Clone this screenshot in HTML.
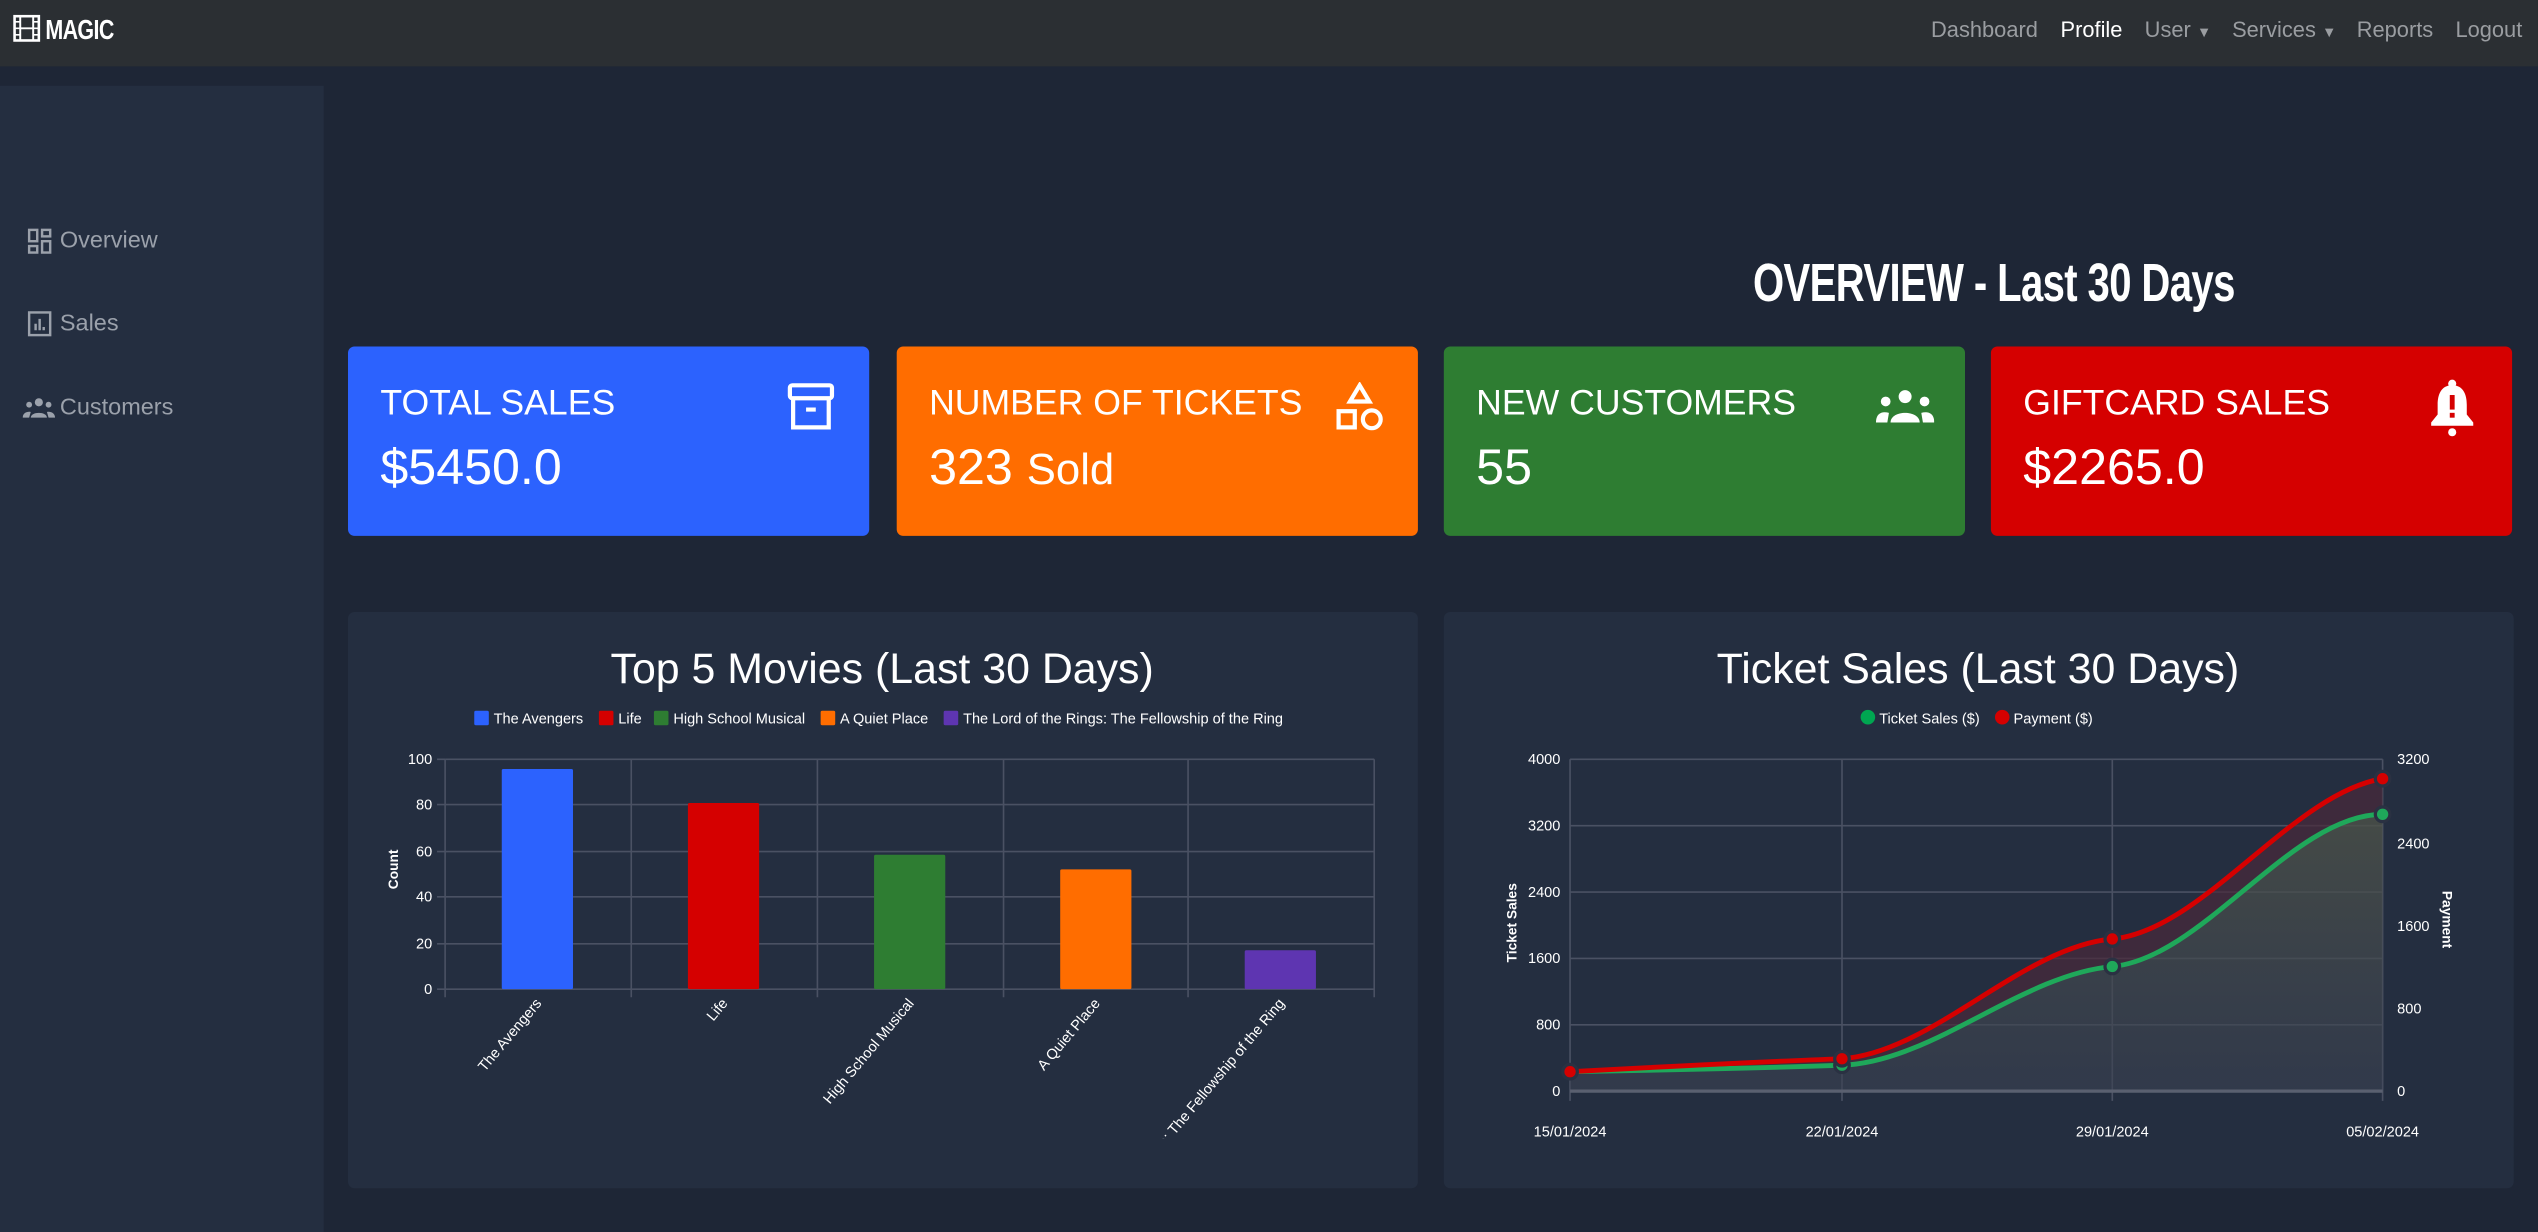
<!DOCTYPE html>
<html><head><meta charset="utf-8"><style>
html,body{margin:0;padding:0;background:#1e2636;overflow:hidden;width:2538px;height:1232px}
#w{position:absolute;left:0;top:0;width:1568px;height:761px;transform:scale(1.61862,1.6189);transform-origin:0 0;font-family:"Liberation Sans",sans-serif;color:#fff}
.a{position:absolute}
.nav{left:0;top:0;width:1568px;height:41px;background:#2b2f33}
.nl{top:11px;font-size:13.5px;color:#9a9da1;white-space:nowrap}
.side{left:0;top:53px;width:200px;height:708px;background:#242e40}
.si{left:37px;font-size:14.5px;color:#9ba1ab}
.card{top:214px;width:322px;height:117px;border-radius:4px}
.ct{left:20px;top:22px;font-size:22px;white-space:nowrap}
.cv{left:20px;top:56px;font-size:31px;white-space:nowrap}
.panel{top:378px;width:661px;height:356px;background:#242e40;border-radius:4px}
</style></head><body><div id="w">
<div class="a nav"></div>
<svg class="a" style="left:8px;top:9px" width="17" height="17" viewBox="0 0 17 17"><rect x="1" y="1" width="15" height="15" fill="none" stroke="#fff" stroke-width="1.6"/><line x1="4.5" y1="1" x2="4.5" y2="16" stroke="#fff" stroke-width="1.2"/><line x1="12.5" y1="1" x2="12.5" y2="16" stroke="#fff" stroke-width="1.2"/><line x1="4.5" y1="8.5" x2="12.5" y2="8.5" stroke="#fff" stroke-width="1.2"/><path d="M1 4.5h3.5M1 8.5h3.5M1 12.5h3.5M12.5 4.5H16M12.5 8.5H16M12.5 12.5H16" stroke="#fff" stroke-width="1"/></svg>
<div class="a" style="left:28px;top:9px;font-size:17px;font-weight:bold;transform:scaleX(0.78);transform-origin:0 0;letter-spacing:-0.5px">MAGIC</div>
<div class="a nl" style="left:1193px">Dashboard</div>
<div class="a nl" style="left:1273px;color:#fff">Profile</div>
<div class="a nl" style="left:1325px">User <span style="font-size:9px">▼</span></div>
<div class="a nl" style="left:1379px">Services <span style="font-size:9px">▼</span></div>
<div class="a nl" style="left:1456px">Reports</div>
<div class="a nl" style="left:1517px">Logout</div>

<div class="a side"></div>
<svg class="a" style="left:17px;top:141px" width="15" height="16" viewBox="0 0 15 16" fill="none" stroke="#9ba1ab" stroke-width="1.5"><rect x="1" y="1" width="5" height="7"/><rect x="9" y="1" width="5" height="4"/><rect x="1" y="11" width="5" height="4"/><rect x="9" y="8" width="5" height="7"/></svg>
<div class="a si" style="top:141px">Overview</div>
<svg class="a" style="left:17px;top:192px" width="15" height="16" viewBox="0 0 15 16"><rect x="1" y="1" width="13" height="14" fill="none" stroke="#9ba1ab" stroke-width="1.5"/><path d="M5 12V8M7.5 12V5M10 12V10" stroke="#9ba1ab" stroke-width="1.5"/></svg>
<div class="a si" style="top:192px">Sales</div>
<svg class="a" style="left:14px;top:245px" width="20" height="14" viewBox="0 0 20 14" fill="#9ba1ab"><circle cx="10" cy="3.5" r="2.5"/><circle cx="4" cy="5" r="1.8"/><circle cx="16" cy="5" r="1.8"/><path d="M5 13c0-4 10-4 10 0z"/><path d="M0 13c0-3 3-4 5-3.5L4 13z"/><path d="M20 13c0-3-3-4-5-3.5L16 13z"/></svg>
<div class="a si" style="top:244px">Customers</div>

<div class="a" style="left:1083px;top:156px;font-size:33px;font-weight:bold;white-space:nowrap;transform:scaleX(0.75);transform-origin:0 0;letter-spacing:-0.5px">OVERVIEW - Last 30 Days</div>

<div class="a card" style="left:215px;background:#2c62fe"><div class="a ct">TOTAL SALES</div><div class="a cv" style="top:57px">$5450.0</div>
<svg class="a" style="left:271px;top:22px" width="30" height="31" viewBox="0 0 30 31" fill="none" stroke="#fff" stroke-width="2.6"><rect x="2" y="2" width="26" height="8" rx="1.5"/><path d="M4 10v18h22V10"/><path d="M12 17h6"/></svg></div>
<div class="a card" style="left:554px;background:#ff6d00"><div class="a ct">NUMBER OF TICKETS</div><div class="a cv" style="top:57px">323 <span style="font-size:27px">Sold</span></div>
<svg class="a" style="left:271px;top:22px" width="30" height="31" viewBox="0 0 30 31" fill="none" stroke="#fff" stroke-width="2.6"><path d="M15 2L9 12h12z"/><rect x="2" y="18" width="10" height="10"/><circle cx="22.5" cy="23" r="5.5"/></svg></div>
<div class="a card" style="left:892px;background:#2e7d32"><div class="a ct">NEW CUSTOMERS</div><div class="a cv" style="top:57px">55</div>
<svg class="a" style="left:267px;top:26px" width="36" height="22" viewBox="0 0 36 22" fill="#fff"><circle cx="18" cy="5" r="4"/><circle cx="6" cy="8" r="3"/><circle cx="30" cy="8" r="3"/><path d="M9 21c0-8 18-8 18 0z"/><path d="M0 21c0-6 4-7 8-6l-1 6z"/><path d="M36 21c0-6-4-7-8-6l1 6z"/></svg></div>
<div class="a card" style="left:1230px;background:#d50000"><div class="a ct">GIFTCARD SALES</div><div class="a cv" style="top:57px">$2265.0</div>
<svg class="a" style="left:270px;top:20px" width="30" height="36" viewBox="0 0 30 36" fill="#fff"><circle cx="15" cy="3" r="2.5"/><path d="M15 4c-7 0-9 6-9 12v6l-4 5v2h26v-2l-4-5v-6c0-6-2-12-9-12z"/><rect x="13.5" y="10" width="3" height="9" fill="#d50000"/><rect x="13.5" y="21" width="3" height="3" fill="#d50000"/><circle cx="15" cy="33" r="2.5"/></svg></div>

<div class="a panel" style="left:215px"></div>
<div class="a panel" style="left:892px"></div>

<svg class="a" style="left:0;top:0" width="1568" height="761" font-family="Liberation Sans, sans-serif">
<defs><clipPath id="cl"><rect x="700" y="615" width="160" height="88"/></clipPath>
<linearGradient id="g1" x1="0" y1="0" x2="0" y2="1"><stop offset="0" stop-color="#4d5248" stop-opacity=".8"/><stop offset="1" stop-color="#3a4152" stop-opacity=".6"/></linearGradient></defs>
<text x="545" y="422" font-size="26.5" fill="#fff" text-anchor="middle">Top 5 Movies (Last 30 Days)</text>
<g font-size="9" fill="#fff">
<rect x="293" y="439" width="9" height="9" rx="1" fill="#2c62fe"/><text x="305" y="447">The Avengers</text>
<rect x="370" y="439" width="9" height="9" rx="1" fill="#d50000"/><text x="382" y="447">Life</text>
<rect x="404" y="439" width="9" height="9" rx="1" fill="#2e7d32"/><text x="416" y="447">High School Musical</text>
<rect x="507" y="439" width="9" height="9" rx="1" fill="#ff6d00"/><text x="519" y="447">A Quiet Place</text>
<rect x="583" y="439" width="9" height="9" rx="1" fill="#5e35b1"/><text x="595" y="447">The Lord of the Rings: The Fellowship of the Ring</text>
</g>
<g stroke="#4a5163" stroke-width="1">
<path d="M275 469H849M275 497H849M275 526H849M275 554H849M275 583H849M275 611H849"/>
<path d="M275 469V616M390 469V616M505 469V616M620 469V616M734 469V616M849 469V616"/>
<path d="M270 469h5M270 497h5M270 526h5M270 554h5M270 583h5M270 611h5"/>
</g>
<g font-size="9" fill="#fff" text-anchor="end">
<text x="267" y="472">100</text><text x="267" y="500">80</text><text x="267" y="529">60</text><text x="267" y="557">40</text><text x="267" y="586">20</text><text x="267" y="614">0</text>
</g>
<text transform="translate(246,537) rotate(-90)" font-size="8.5" font-weight="bold" fill="#fff" text-anchor="middle">Count</text>
<rect x="310" y="475" width="44" height="136" rx="1" fill="#2c62fe"/>
<rect x="425" y="496" width="44" height="115" rx="1" fill="#d50000"/>
<rect x="540" y="528" width="44" height="83" rx="1" fill="#2e7d32"/>
<rect x="655" y="537" width="44" height="74" rx="1" fill="#ff6d00"/>
<rect x="769" y="587" width="44" height="24" rx="1" fill="#5e35b1"/>
<g font-size="9" fill="#fff" text-anchor="end">
<text transform="translate(335,620) rotate(-50)">The Avengers</text>
<text transform="translate(450,620) rotate(-50)">Life</text>
<text transform="translate(565,620) rotate(-50)">High School Musical</text>
<text transform="translate(680,620) rotate(-50)">A Quiet Place</text>
</g>
<g clip-path="url(#cl)"><text font-size="9" fill="#fff" text-anchor="end" transform="translate(794,620) rotate(-50)">The Lord of the Rings: The Fellowship of the Ring</text></g>

<text x="1222" y="422" font-size="26.5" fill="#fff" text-anchor="middle">Ticket Sales (Last 30 Days)</text>
<g font-size="9" fill="#fff">
<circle cx="1154" cy="443" r="4.5" fill="#00a651"/><text x="1161" y="447">Ticket Sales ($)</text>
<circle cx="1237" cy="443" r="4.5" fill="#d50000"/><text x="1244" y="447">Payment ($)</text>
</g>
<g stroke="#4a5163" stroke-width="1">
<path d="M970 469H1472M970 510H1472M970 551H1472M970 592H1472M970 633H1472"/>
<path d="M970 469V680M1138 469V680M1305 469V680M1472 469V680"/>
</g>
<path d="M970 662C1026 659 1082 656 1138 654C1194 650 1249 585 1305 580C1361 575 1416 490 1472 481L1472 503C1416 503 1361 592 1305 597C1249 602 1194 656 1138 658C1082 660 1026 661 970 662Z" fill="#4a2a3a" opacity=".7"/>
<path d="M970 662C1026 661 1082 660 1138 658C1194 656 1249 602 1305 597C1361 592 1416 503 1472 503V674H970Z" fill="url(#g1)"/>
<path d="M970 674H1472" stroke="#5a6070" stroke-width="2"/>
<path d="M970 662C1026 661 1082 660 1138 658C1194 656 1249 602 1305 597C1361 592 1416 503 1472 503" fill="none" stroke="#1fa85a" stroke-width="3"/>
<path d="M970 662C1026 659 1082 656 1138 654C1194 650 1249 585 1305 580C1361 575 1416 490 1472 481" fill="none" stroke="#d50000" stroke-width="3"/>
<g stroke="#2a3142" stroke-width="2">
<circle cx="1138" cy="658" r="4.5" fill="#1fa85a"/><circle cx="1305" cy="597" r="4.5" fill="#1fa85a"/><circle cx="1472" cy="503" r="4.5" fill="#1fa85a"/>
<circle cx="970" cy="662" r="4.5" fill="#d50000"/><circle cx="1138" cy="654" r="4.5" fill="#d50000"/><circle cx="1305" cy="580" r="4.5" fill="#d50000"/><circle cx="1472" cy="481" r="4.5" fill="#d50000"/>
</g>
<g font-size="9" fill="#fff" text-anchor="end">
<text x="964" y="472">4000</text><text x="964" y="513">3200</text><text x="964" y="554">2400</text><text x="964" y="595">1600</text><text x="964" y="636">800</text><text x="964" y="677">0</text>
</g>
<g font-size="9" fill="#fff">
<text x="1481" y="472">3200</text><text x="1481" y="524">2400</text><text x="1481" y="575">1600</text><text x="1481" y="626">800</text><text x="1481" y="677">0</text>
</g>
<g font-size="9" fill="#fff" text-anchor="middle">
<text x="970" y="702">15/01/2024</text><text x="1138" y="702">22/01/2024</text><text x="1305" y="702">29/01/2024</text><text x="1472" y="702">05/02/2024</text>
</g>
<text transform="translate(937,570) rotate(-90)" font-size="8.5" font-weight="bold" fill="#fff" text-anchor="middle">Ticket Sales</text>
<text transform="translate(1509,568) rotate(90)" font-size="8.5" font-weight="bold" fill="#fff" text-anchor="middle">Payment</text>
</svg>
</div></body></html>
